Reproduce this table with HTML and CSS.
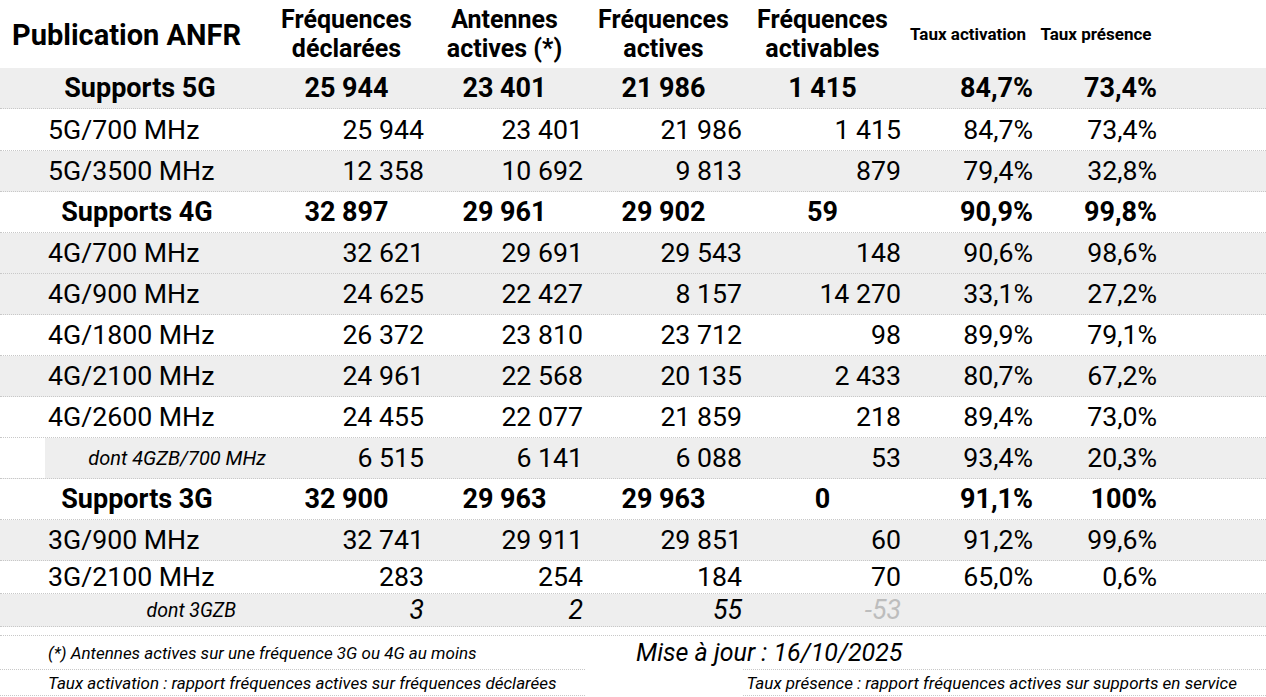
FILE: index.html
```html
<!DOCTYPE html>
<html lang="fr">
<head>
<meta charset="utf-8">
<title>Publication ANFR</title>
<link rel="stylesheet" href="styles.css">
</head>
<body>
<div class="sheet">
  <div class="row head">
    <div class="c title">Publication ANFR</div>
    <div class="c h">Fréquences<br>déclarées</div>
    <div class="c h">Antennes<br>actives (*)</div>
    <div class="c h">Fréquences<br>actives</div>
    <div class="c h">Fréquences<br>activables</div>
    <div class="c hs">Taux activation</div>
    <div class="c hs">Taux présence</div>
    <div class="c"></div>
  </div>

  <div class="row tot gray">
    <div class="c lab s5">Supports 5G</div>
    <div class="c mid">25 944</div><div class="c mid">23 401</div><div class="c mid">21 986</div><div class="c mid">1 415</div>
    <div class="c num">84,7%</div><div class="c num">73,4%</div><div class="c"></div>
  </div>
  <div class="row std tall">
    <div class="c lab">5G/700 MHz</div>
    <div class="c num">25 944</div><div class="c num">23 401</div><div class="c num">21 986</div><div class="c num">1 415</div>
    <div class="c num">84,7%</div><div class="c num">73,4%</div><div class="c"></div>
  </div>
  <div class="row std gray">
    <div class="c lab">5G/3500 MHz</div>
    <div class="c num">12 358</div><div class="c num">10 692</div><div class="c num">9 813</div><div class="c num">879</div>
    <div class="c num">79,4%</div><div class="c num">32,8%</div><div class="c"></div>
  </div>

  <div class="row tot">
    <div class="c lab">Supports 4G</div>
    <div class="c mid">32 897</div><div class="c mid">29 961</div><div class="c mid">29 902</div><div class="c mid">59</div>
    <div class="c num">90,9%</div><div class="c num">99,8%</div><div class="c"></div>
  </div>
  <div class="row std gray">
    <div class="c lab">4G/700 MHz</div>
    <div class="c num">32 621</div><div class="c num">29 691</div><div class="c num">29 543</div><div class="c num">148</div>
    <div class="c num">90,6%</div><div class="c num">98,6%</div><div class="c"></div>
  </div>
  <div class="row std gray">
    <div class="c lab">4G/900 MHz</div>
    <div class="c num">24 625</div><div class="c num">22 427</div><div class="c num">8 157</div><div class="c num">14 270</div>
    <div class="c num">33,1%</div><div class="c num">27,2%</div><div class="c"></div>
  </div>
  <div class="row std">
    <div class="c lab">4G/1800 MHz</div>
    <div class="c num">26 372</div><div class="c num">23 810</div><div class="c num">23 712</div><div class="c num">98</div>
    <div class="c num">89,9%</div><div class="c num">79,1%</div><div class="c"></div>
  </div>
  <div class="row std gray">
    <div class="c lab">4G/2100 MHz</div>
    <div class="c num">24 961</div><div class="c num">22 568</div><div class="c num">20 135</div><div class="c num">2 433</div>
    <div class="c num">80,7%</div><div class="c num">67,2%</div><div class="c"></div>
  </div>
  <div class="row std">
    <div class="c lab">4G/2600 MHz</div>
    <div class="c num">24 455</div><div class="c num">22 077</div><div class="c num">21 859</div><div class="c num">218</div>
    <div class="c num">89,4%</div><div class="c num">73,0%</div><div class="c"></div>
  </div>
  <div class="row std sub gray">
    <div class="c blank"></div>
    <div class="c lab dont4">dont 4GZB/700 MHz</div>
    <div class="c num">6 515</div><div class="c num">6 141</div><div class="c num">6 088</div><div class="c num">53</div>
    <div class="c num">93,4%</div><div class="c num">20,3%</div><div class="c"></div>
  </div>

  <div class="row tot">
    <div class="c lab">Supports 3G</div>
    <div class="c mid">32 900</div><div class="c mid">29 963</div><div class="c mid">29 963</div><div class="c mid">0</div>
    <div class="c num">91,1%</div><div class="c num">100%</div><div class="c"></div>
  </div>
  <div class="row std gray">
    <div class="c lab">3G/900 MHz</div>
    <div class="c num">32 741</div><div class="c num">29 911</div><div class="c num">29 851</div><div class="c num">60</div>
    <div class="c num">91,2%</div><div class="c num">99,6%</div><div class="c"></div>
  </div>
  <div class="row std short">
    <div class="c lab">3G/2100 MHz</div>
    <div class="c num">283</div><div class="c num">254</div><div class="c num">184</div><div class="c num">70</div>
    <div class="c num">65,0%</div><div class="c num">0,6%</div><div class="c"></div>
  </div>
  <div class="row std short zb gray">
    <div class="c lab dont3">dont 3GZB</div>
    <div class="c num">3</div><div class="c num">2</div><div class="c num">55</div><div class="c num neg">-53</div>
    <div class="c"></div><div class="c"></div><div class="c"></div>
  </div>
  <div class="spacer"></div>

  <div class="foot">
    <div class="f note">(*) Antennes actives sur une fréquence 3G ou 4G au moins</div>
    <div class="f date">Mise à jour : 16/10/2025</div>
    <div class="f note line">Taux activation : rapport fréquences actives sur fréquences déclarées</div>
    <div class="f"></div>
    <div class="f note line right">Taux présence : rapport fréquences actives sur supports en service</div>
  </div>
</div>
</body>
</html>
```

FILE: styles.css
```css
* { box-sizing: border-box; }
html, body { margin: 0; padding: 0; background: #ffffff; }
body {
  font-family: Roboto, "Noto Sans", "Liberation Sans", sans-serif;
  color: #000;
  width: 1266px;
  height: 697px;
  overflow: hidden;
}
.sheet { width: 1266px; }

.row {
  display: grid;
  grid-template-columns: 268px 157px 159px 159px 159px 132px 124px 1fr;
  height: 41px;
  border-bottom: 1px dotted #c8c8c8;
  align-items: center;
}
.row.sub { grid-template-columns: 45px 223px 157px 159px 159px 159px 132px 124px 1fr; }
.row.gray { background: #eeeeee; }
.row.tall { height: 42px; }
.row.short { height: 33px; }
.row.head { height: 68px; border-bottom: none; }
.row.tot { height: 41px; }

.c { white-space: nowrap; overflow: visible; }
.blank { background: #ffffff; align-self: stretch; }

.title {
  font-weight: 700;
  font-size: 29px;
  padding-left: 12px;
  padding-top: 1px;
}
.h {
  font-weight: 700;
  font-size: 25px;
  line-height: 29px;
  text-align: center;
}
.hs {
  font-weight: 700;
  font-size: 17px;
  text-align: center;
}

.std { font-size: 26.7px; }
.std .lab { padding-left: 48px; }
.std .num { text-align: right; padding-right: 1px; }

.tot { font-size: 27px; font-weight: 700; }
.tot .lab { text-align: center; padding-left: 6px; }
.tot .lab.s5 { padding-left: 12px; }
.tot .mid { text-align: center; }
.tot .num { text-align: right; padding-right: 1px; }

.sub .lab.dont4 {
  padding-left: 0;
  font-style: italic;
  font-size: 20px;
  text-align: right;
  padding-right: 2px;
}
.zb .num { font-style: italic; }
.zb .lab.dont3 {
  padding-left: 0;
  font-style: italic;
  font-size: 19.5px;
  text-align: right;
  padding-right: 32px;
}
.neg { color: #bdbdbd; }

.spacer { height: 9px; border-bottom: 1px dotted #c8c8c8; }

.foot {
  display: grid;
  grid-template-columns: 585px 158px 1fr;
  grid-template-rows: 33px 27px;
  font-style: italic;
}
.f { display: flex; align-items: center; white-space: nowrap; }
.note { font-size: 17px; padding-left: 48px; }
.date {
  grid-column: 2 / 4;
  font-size: 25px;
  padding-left: 51px;
}
.line {
  border-top: 1px dotted #c8c8c8;
  border-bottom: 1px dotted #c8c8c8;
}
.right { justify-content: flex-end; padding-left: 0; padding-right: 29px; }
```
